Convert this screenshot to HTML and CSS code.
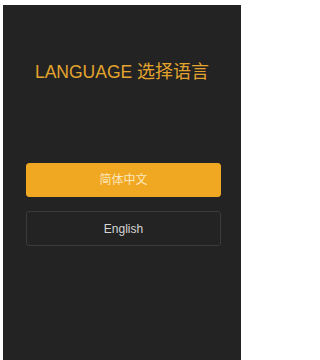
FILE: index.html
```html
<!DOCTYPE html>
<html lang="zh">
<head>
<meta charset="utf-8">
<link rel="stylesheet" href="styles.css">
</head>
<body>
<div class="panel">
  <h1 class="title">LANGUAGE <span class="title-cn">选择语言</span></h1>
  <div class="buttons">
    <button class="btn btn-primary">简体中文</button>
    <button class="btn btn-outline">English</button>
  </div>
</div>
</body>
</html>
```
FILE: styles.css
```css
html, body {
  margin: 0;
  padding: 0;
  background: #ffffff;
}
body {
  width: 244px;
  height: 360px;
  overflow: hidden;
  font-family: "Liberation Sans", "Noto Sans CJK SC", sans-serif;
}
.panel {
  margin: 5px 3px 0 3px;
  width: 238px;
  height: 355px;
  background: #232323;
  box-sizing: border-box;
  padding-top: 57px;
  display: flex;
  flex-direction: column;
}
.title {
  margin: 0;
  font-weight: normal;
  font-size: 17.5px;
  line-height: 20px;
  height: 20px;
  color: #e3a42e;
  text-align: center;
  white-space: nowrap;
}
.title-cn {
  font-size: 18px;
}
.buttons {
  margin-top: 81px;
  padding: 0 20px 0 23px;
  display: flex;
  flex-direction: column;
  gap: 14px;
}
.btn {
  display: block;
  width: 195px;
  margin: 0;
  font-family: "Liberation Sans", "Noto Sans CJK SC", sans-serif;
  font-size: 12px;
  border-radius: 3px;
  box-sizing: border-box;
  padding: 0;
  line-height: 1;
}
.btn-primary {
  height: 34px;
  background: #f0a722;
  border: 1px solid #f0a722;
  color: #fce7bd;
}
.btn-outline {
  height: 35px;
  background: #232323;
  border: 1px solid #3b3b3b;
  color: #d6d6d6;
}
```
